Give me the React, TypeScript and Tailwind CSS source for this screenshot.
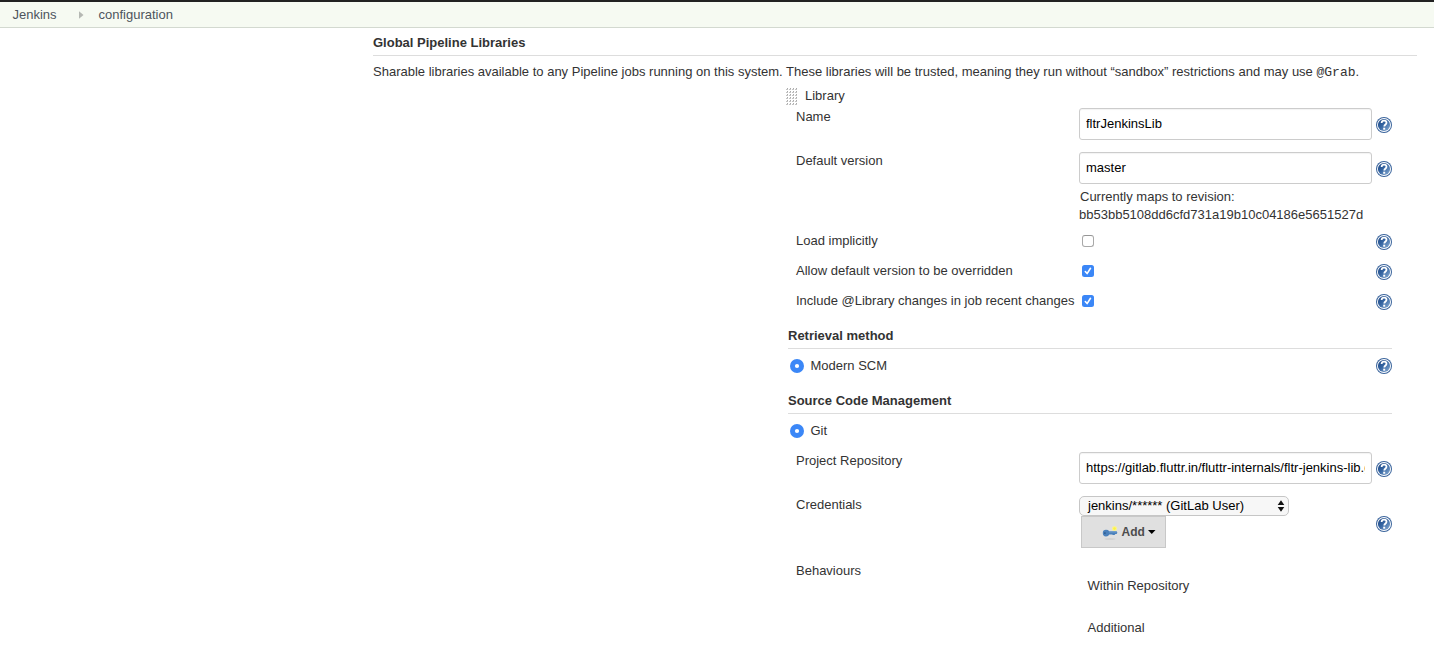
import type { ReactNode } from "react";

function HelpIcon() {
  return (
    <svg width="16" height="16" viewBox="0 0 16 16" role="img" aria-label="Help" className="block">
      <defs>
        <linearGradient id="help-fill" x1="0" y1="0" x2="1" y2="1">
          <stop offset="0" stopColor="#1d4480" />
          <stop offset="0.45" stopColor="#3565a2" />
          <stop offset="1" stopColor="#8fb1d6" />
        </linearGradient>
      </defs>
      <circle cx="8" cy="8" r="8" fill="#3a649c" />
      <circle cx="8" cy="8" r="7" fill="#fff" />
      <circle cx="8" cy="8" r="6.1" fill="url(#help-fill)" />
      <path d="M5.6 6C5.7 4.3 6.8 3.7 8.1 3.7c1.4 0 2.4.8 2.4 2.1 0 1.6-2.2 1.8-2.2 3.8" fill="none" stroke="#fff" strokeWidth="1.8" />
      <rect x="7.2" y="10.7" width="2" height="2" fill="#fff" />
    </svg>
  );
}

function Grip() {
  return (
    <svg width="12" height="18" viewBox="0 0 12 18" className="block">
      {[0, 1, 2, 3, 4, 5].map((r) =>
        [0, 1, 2, 3].map((c) => (
          <g key={`${r}-${c}`}>
            <rect x={c * 3 + 1} y={r * 3} width="1" height="1" fill="#aaa" />
            <rect x={c * 3} y={r * 3 + 1} width="2" height="1" fill="#c4c4c4" />
          </g>
        ))
      )}
    </svg>
  );
}

function Check({ on }: { on: boolean }) {
  return on ? (
    <svg width="12" height="12" viewBox="0 0 12 12" className="block">
      <rect width="12" height="12" rx="2.5" fill="#3b87f7" />
      <path d="M3.3 6.5 5.1 8.6 8.5 3.3" fill="none" stroke="#fff" strokeWidth="1.6" strokeLinecap="round" strokeLinejoin="round" />
    </svg>
  ) : (
    <div className="size-3 rounded-[3px] border border-[#a9a9a9] border-t-[#969696] bg-white" />
  );
}

function Radio() {
  return (
    <svg width="14" height="14" viewBox="0 0 14 14" className="block">
      <circle cx="7" cy="7" r="7" fill="#3b87f7" />
      <circle cx="7" cy="7" r="2.1" fill="#fff" />
    </svg>
  );
}

function KeyIcon() {
  return (
    <svg width="16" height="16" viewBox="0 0 16 16" className="block">
      <ellipse cx="8" cy="15" rx="5.5" ry="0.7" fill="#cdcdcd" />
      <circle cx="12.5" cy="4.6" r="2.6" fill="#f8f09a" />
      <circle cx="12.5" cy="4.6" r="1.3" fill="#fdf53c" />
      <path d="M0.8 9Q0.8 5.8 4 5.8 6.4 5.8 7.2 7.2H14.6L15.4 8.7 14.6 10H13.4L12.6 11H11L10 10.4 7.3 10.6Q6.3 12.6 3.9 12.5 0.8 12.2 0.8 9Z" fill="#4a80bb" />
      <path d="M7 8h7.6" stroke="#78a3d0" strokeWidth=".8" />
      <circle cx="2.9" cy="9.1" r=".9" fill="#2c5788" />
    </svg>
  );
}

function Row({
  label,
  height,
  help,
  children,
}: {
  label: string;
  height: string;
  help?: string;
  children?: ReactNode;
}) {
  return (
    <div className={`flex items-start ${height}`}>
      <div className="w-[283px] shrink-0 whitespace-nowrap">{label}</div>
      <div className="w-[297px] shrink-0">{children}</div>
      {help && (
        <div className={help}>
          <HelpIcon />
        </div>
      )}
    </div>
  );
}

function TextField({ value }: { value: string }) {
  return (
    <div className="h-8 w-[293px] rounded-[3px] border border-[#ccc] bg-white px-1.5 pt-[6px] text-black shadow-[inset_0_1px_1px_rgba(0,0,0,0.05)]">
      <div className="overflow-hidden whitespace-nowrap">{value}</div>
    </div>
  );
}

function Heading({ children }: { children: string }) {
  return <h2 className="h-[22px] w-[604px] border-b border-[#ddd] font-bold">{children}</h2>;
}

function RadioRow({ label, help }: { label: string; help?: boolean }) {
  return (
    <div className="flex h-[18px] w-[604px] items-center pl-0.5">
      <Radio />
      <span className="ml-[6.5px] flex-1">{label}</span>
      {help && <HelpIcon />}
    </div>
  );
}

export default function App() {
  return (
    <div className="h-[662px] overflow-hidden bg-white font-['Liberation_Sans',Arial,sans-serif] text-[13px] leading-[18px] text-[#333]">
      <nav className="flex h-7 border-t-2 border-b border-t-[#222] border-b-[#d3d9d0] bg-[#f6faf2] pt-1 pl-[12.5px] text-[#4d545d]">
        <span className="w-[66px]">Jenkins</span>
        <svg width="5" height="8" viewBox="0 0 5 8" className="mt-[5px] mr-[15px]">
          <path d="M0 0.3 4.5 4 0 7.7Z" fill="#b5b8b3" />
        </svg>
        <span>configuration</span>
      </nav>

      <main className="pl-[373px]">
        <h1 className="h-7 w-[1044px] border-b border-[#ddd] pt-[6px] font-bold">Global Pipeline Libraries</h1>
        <p className="h-[31px] pt-[7px] whitespace-nowrap">
          Sharable libraries available to any Pipeline jobs running on this system. These libraries will be trusted, meaning
          they run without “sandbox” restrictions and may use{" "}
          <code className="font-['Liberation_Mono',monospace] text-[13px] leading-none">@Grab</code>.
        </p>

        <section className="pl-[413px]">
          <div className="flex h-[21px] items-start">
            <div className="pt-px">
              <Grip />
            </div>
            <span className="ml-[7px]">Library</span>
          </div>

          <div className="pl-2.5">
            <Row label="Name" height="h-11" help="pt-[9px]">
              <TextField value="fltrJenkinsLib" />
            </Row>
            <Row label="Default version" height="h-20" help="pt-[9px]">
              <TextField value="master" />
              <div className="pt-1 pl-px">Currently maps to revision:</div>
              <div>bb53bb5108dd6cfd731a19b10c04186e5651527d</div>
            </Row>
            <Row label="Load implicitly" height="h-[30px]" help="pt-0.5">
              <div className="pt-[3px] pl-[3px]"><Check on={false} /></div>
            </Row>
            <Row label="Allow default version to be overridden" height="h-[30px]" help="pt-0.5">
              <div className="pt-[3px] pl-[3px]"><Check on /></div>
            </Row>
            <Row label="Include @Library changes in job recent changes" height="h-[30px]" help="pt-0.5">
              <div className="pt-[3px] pl-[3px]"><Check on /></div>
            </Row>
          </div>

          <div className="pt-[5px] pl-0.5">
            <Heading>Retrieval method</Heading>
            <div className="pt-2">
              <RadioRow label="Modern SCM" help />
            </div>
            <div className="pt-[17px]">
              <Heading>Source Code Management</Heading>
            </div>
            <div className="pt-2">
              <RadioRow label="Git" />
            </div>
          </div>

          <div className="pt-3 pl-2.5">
            <Row label="Project Repository" height="h-11" help="pt-[9px]">
              <TextField value="https://gitlab.fluttr.in/fluttr-internals/fltr-jenkins-lib.git" />
            </Row>
            <Row label="Credentials" height="h-[66px]" help="pt-5">
              <div className="flex h-5 w-[210px] items-center justify-between rounded-[5px] border border-[#c6c6c6] bg-[#f7f7f7] pr-[3px] pl-2 text-black">
                <span>jenkins/****** (GitLab User)</span>
                <svg width="8" height="12" viewBox="0 0 8 12">
                  <path d="M4 0.3 7.3 5H.7zM4 11.7.7 7h6.6z" fill="#111" />
                </svg>
              </div>
              <div className="ml-0.5 flex h-8 w-[85px] items-center border border-[#c8c8c8] bg-[#e0e0e0] pl-5 font-bold text-[#4d4d4d]">
                <KeyIcon />
                <span className="ml-[3.5px] text-[12px]">Add</span>
                <svg width="8" height="4" viewBox="0 0 8 4" className="ml-[3.5px]">
                  <path d="M0 0h7.5L3.75 4z" fill="#000" />
                </svg>
              </div>
            </Row>
            <Row label="Behaviours" height="h-[100px]">
              <div className="pt-[15px] pl-[8.5px]">Within Repository</div>
              <div className="pt-6 pl-[8.5px]">Additional</div>
            </Row>
          </div>
        </section>
      </main>
    </div>
  );
}
